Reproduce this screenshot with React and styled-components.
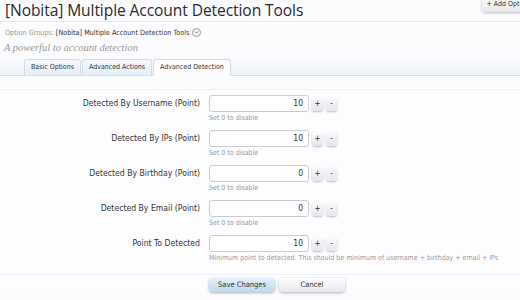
import React from "react";
import styled, { createGlobalStyle } from "styled-components";

const GlobalStyle = createGlobalStyle`
  html, body {
    margin: 0;
    padding: 0;
    background: #fcfcfe;
  }
  body {
    font-family: "DejaVu Sans Condensed", "DejaVu Sans", sans-serif;
    font-size: 8px;
    color: #333;
    width: 520px;
    height: 300px;
    overflow: hidden;
  }
`;

const Page = styled.div`
  width: 520px;
  height: 300px;
  overflow: hidden;
`;

const TitleBar = styled.div`
  display: flex;
  justify-content: space-between;
  align-items: flex-start;
  height: 21px;
  border-bottom: 1px solid #e2eaf1;
`;

const Title = styled.h1`
  margin: 0;
  padding: 0 0 0 5px;
  font-family: "Open Sans", sans-serif;
  font-weight: 400;
  font-size: 15.6px;
  line-height: 20px;
  color: #2a2a2a;
  letter-spacing: -0.1px;
  white-space: nowrap;
`;

const AddButton = styled.div`
  margin-top: -3px;
  margin-right: -14px;
  padding: 2px 5px;
  font-size: 7px;
  line-height: 11px;
  color: #333;
  border-radius: 4px;
  background: linear-gradient(#fafafa, #e6e8ec);
  box-shadow: 0 1px 3px rgba(0, 0, 0, 0.25);
  white-space: nowrap;
`;

const Breadcrumb = styled.div`
  padding: 4px 0 0 5px;
  height: 12px;
  color: #999;
  font-size: 7.2px;
  display: flex;
  align-items: center;
  gap: 2px;
`;

const Crumb = styled.span`
  color: #333;
`;

const Chevron = styled.span`
  display: inline-flex;
  align-items: center;
  justify-content: center;
  width: 7px;
  height: 7px;
  border: 1px solid #999;
  border-radius: 50%;
  margin-left: 1px;
`;

const Tagline = styled.div`
  padding: 4px 0 0 4px;
  font-family: "Liberation Serif", serif;
  font-style: italic;
  font-size: 10.5px;
  color: #9a9a9a;
  height: 14px;
`;

const TabBar = styled.div`
  display: flex;
  align-items: flex-end;
  padding: 3px 0 0 24px;
  height: 16px;
  border-bottom: 1px solid #d4dfe9;
  background: linear-gradient(#fcfcfe, #ecf3f9);
`;

const Tab = styled.div`
  padding: 0 6px;
  height: ${(p) => (p.$active ? "16px" : "15px")};
  line-height: 15px;
  font-size: 7px;
  color: #333;
  border: 1px solid #cfdde9;
  border-bottom: none;
  border-radius: 3px 3px 0 0;
  margin-right: 1px;
  margin-bottom: ${(p) => (p.$active ? "-1px" : "0")};
  background: ${(p) =>
    p.$active ? "#fdfdff" : "linear-gradient(#f6f9fc, #e4eef7)"};
`;

const Form = styled.div`
  margin-top: 13px;
  border-top: 1px solid #edf0f4;
  background: #fdfdff;
  padding-top: 5px;
`;

const Row = styled.div`
  display: grid;
  grid-template-columns: 200px 1fr;
  column-gap: 9px;
  height: 35px;
`;

const Label = styled.div`
  text-align: right;
  font-size: 8.6px;
  color: #333;
  padding-top: 3px;
`;

const Controls = styled.div`
  display: flex;
  flex-direction: column;
`;

const SpinRow = styled.div`
  display: flex;
  align-items: center;
  gap: 3px;
`;

const Input = styled.div`
  width: 93px;
  height: 15px;
  border: 1px solid #c9ccd2;
  border-radius: 3px;
  background: #fff;
  text-align: right;
  padding-right: 5px;
  line-height: 15px;
  font-size: 8.5px;
  color: #333;
`;

const SpinButton = styled.div`
  width: 11px;
  height: 14px;
  border-radius: 3px;
  background: linear-gradient(#fbfbfc, #e3e6ea);
  box-shadow: 0 1px 2px rgba(0, 0, 0, 0.25);
  font-size: 8px;
  line-height: 14px;
  text-align: center;
  color: #333;
`;

const Hint = styled.div`
  margin-top: 2px;
  font-size: 7px;
  color: #9a9a9a;
  white-space: nowrap;
`;

const Footer = styled.div`
  margin-top: 4px;
  border-top: 1px solid #edf0f4;
  padding: 3px 0 0 209px;
  display: flex;
  gap: 4px;
`;

const Button = styled.div`
  width: 66px;
  height: 14px;
  line-height: 14px;
  text-align: center;
  font-size: 7.5px;
  color: #333;
  border-radius: 4px;
  background: ${(p) =>
    p.$primary
      ? "linear-gradient(#e4f1fa, #bcdaec)"
      : "linear-gradient(#fdfdfd, #e6e8ec)"};
  box-shadow: 0 1px 3px rgba(0, 0, 0, 0.3);
`;

const fields = [
  { label: "Detected By Username (Point)", value: 10, hint: "Set 0 to disable" },
  { label: "Detected By IPs (Point)", value: 10, hint: "Set 0 to disable" },
  { label: "Detected By Birthday (Point)", value: 0, hint: "Set 0 to disable" },
  { label: "Detected By Email (Point)", value: 0, hint: "Set 0 to disable" },
  {
    label: "Point To Detected",
    value: 10,
    hint: "Minimum point to detected. This should be minimum of username + birthday + email + IPs",
  },
];

export default function App() {
  return (
    <Page>
      <GlobalStyle />
      <TitleBar>
        <Title>[Nobita] Multiple Account Detection Tools</Title>
        <AddButton>+ Add Option</AddButton>
      </TitleBar>
      <Breadcrumb>
        Option Groups: <Crumb>[Nobita] Multiple Account Detection Tools</Crumb>
        <Chevron>
          <svg width="5" height="3" viewBox="0 0 6 4">
            <path d="M0.5 0.5 L3 3 L5.5 0.5" fill="none" stroke="#555" strokeWidth="1" />
          </svg>
        </Chevron>
      </Breadcrumb>
      <Tagline>A powerful to account detection</Tagline>
      <TabBar>
        <Tab>Basic Options</Tab>
        <Tab>Advanced Actions</Tab>
        <Tab $active>Advanced Detection</Tab>
      </TabBar>
      <Form>
        {fields.map((f) => (
          <Row key={f.label}>
            <Label>{f.label}</Label>
            <Controls>
              <SpinRow>
                <Input>{f.value}</Input>
                <SpinButton>+</SpinButton>
                <SpinButton>-</SpinButton>
              </SpinRow>
              <Hint>{f.hint}</Hint>
            </Controls>
          </Row>
        ))}
        <Footer>
          <Button $primary>Save Changes</Button>
          <Button>Cancel</Button>
        </Footer>
      </Form>
    </Page>
  );
}
